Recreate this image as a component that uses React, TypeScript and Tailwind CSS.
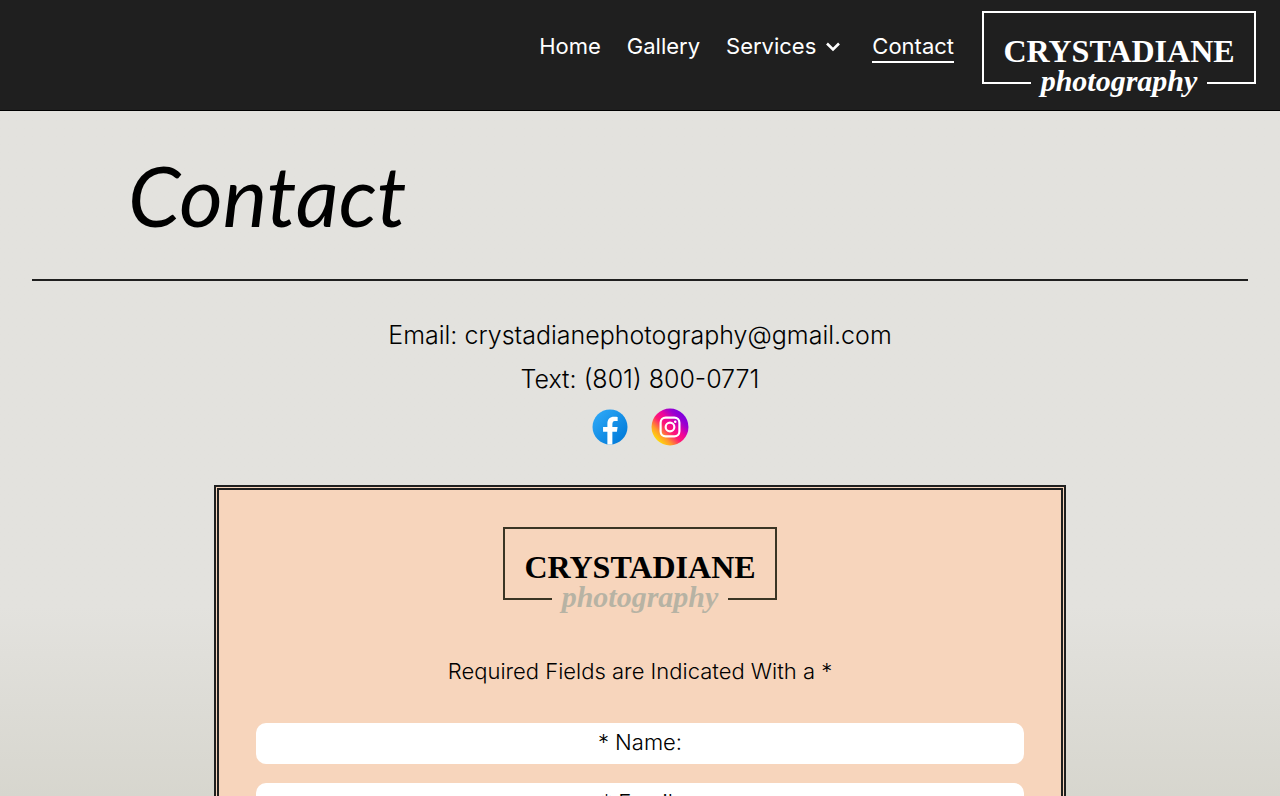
import { useState } from "react";

const Logo = ({ dark }: { dark?: boolean }) => {
  const line = dark ? "border-[#3a3524]" : "border-white";

  return (
    <div className="w-[274px]">
      <div
        className={`flex h-[72px] justify-center border-2 border-b-0 pt-[18px] ${line}`}
      >
        <span
          className={`font-['Liberation_Serif',serif] text-[32px] leading-10 font-bold ${
            dark ? "text-black" : "text-white"
          }`}
        >
          CRYSTADIANE
        </span>
      </div>
      <div className="-mt-4 flex h-8 items-center">
        <span className={`flex-1 border-t-2 ${line}`} />
        <span
          className={`px-[10px] pb-1 font-['Liberation_Serif',serif] text-[30px] leading-7 font-bold italic ${
            dark ? "text-[#b7b3a4]" : "text-white"
          }`}
        >
          photography
        </span>
        <span className={`flex-1 border-t-2 ${line}`} />
      </div>
    </div>
  );
};

const Header = () => {
  const [isOpen, setIsOpen] = useState(false);

  return (
    <header className="flex justify-end gap-7 border-b border-black bg-[#1f1f1f] pt-[11px] pr-6 pb-[11px] text-white">
      <nav className="flex items-start gap-[26px] pt-5 text-[22px] leading-[30px]">
        <a href="#home">Home</a>
        <a href="#gallery">Gallery</a>
        <div className="relative">
          <button
            type="button"
            aria-expanded={isOpen}
            onClick={() => setIsOpen(!isOpen)}
            className="flex cursor-pointer items-center gap-2 pr-1"
          >
            Services
            <svg viewBox="0 0 18 18" className="h-[18px] w-[18px]" fill="none">
              <path d="M3 6.500L9 12.500L15 6.500" stroke="currentColor" strokeWidth="2.6" />
            </svg>
          </button>
          {isOpen && (
            <div className="absolute top-10 left-0 bg-[#1f1f1f] px-4 py-2">
              <a href="#services">Services</a>
            </div>
          )}
        </div>
        <a href="#contact" className="border-b-2 border-white">
          Contact
        </a>
      </nav>
      <a href="#home">
        <Logo />
      </a>
    </header>
  );
};

const FacebookIcon = () => (
  <svg viewBox="0 0 48 48" className="h-[42px] w-[42px]">
    <defs>
      <linearGradient id="fb" x1="9.99" x2="40.15" y1="9.99" y2="40.15" gradientUnits="userSpaceOnUse">
        <stop offset="0" stopColor="#2aa4f4" />
        <stop offset="1" stopColor="#007ad9" />
      </linearGradient>
    </defs>
    <path fill="url(#fb)" d="M24,4C12.954,4,4,12.954,4,24s8.954,20,20,20s20-8.954,20-20S35.046,4,24,4z" />
    <path
      fill="#fff"
      d="M26.707,29.301h5.176l0.813-5.258h-5.989v-2.874c0-2.184,0.714-4.121,2.757-4.121h3.283V12.46c-0.577-0.078-1.797-0.248-4.102-0.248c-4.814,0-7.636,2.542-7.636,8.334v3.498H16.06v5.258h4.948v14.452C21.988,43.9,22.981,44,24,44c0.921,0,1.82-0.084,2.707-0.204V29.301z"
    />
  </svg>
);

const InstagramIcon = () => (
  <svg viewBox="-7 -7 116 116" className="h-[42px] w-[42px]">
    <defs>
      <linearGradient id="ig" x1="14" y1="88" x2="88" y2="14" gradientUnits="userSpaceOnUse">
        <stop offset="0" stopColor="#ffdd09" />
        <stop offset="0.2" stopColor="#ff9a2b" />
        <stop offset="0.42" stopColor="#ff1b70" />
        <stop offset="0.6" stopColor="#f0059a" />
        <stop offset="0.82" stopColor="#9b00d0" />
        <stop offset="1" stopColor="#7a00e0" />
      </linearGradient>
    </defs>
    <circle cx="51" cy="51" r="51" fill="url(#ig)" />
    <rect x="25" y="25" width="52" height="52" rx="14" fill="none" stroke="#fff" strokeWidth="6" />
    <circle cx="51" cy="51" r="12" fill="none" stroke="#fff" strokeWidth="6" />
    <circle cx="65.5" cy="36.5" r="3.5" fill="#fff" />
  </svg>
);

const Field = ({ name, type }: { name: string; type: string }) => (
  <input
    type={type}
    name={name}
    aria-label={name}
    placeholder={`* ${name}:`}
    required
    className="h-[41px] w-full rounded-[10px] bg-white pb-1 text-center text-[22px] font-light text-black placeholder-black outline-none"
  />
);

export default function App() {
  return (
    <div className="min-h-screen bg-linear-to-b from-[#e3e2de] from-67% to-[#d0cfc5] font-[Inter,sans-serif] text-black">
      <Header />
      <main className="pb-10">
        <h1 className="px-[10%] pt-9 font-[Lato,sans-serif] text-[84px] leading-[96px] italic">
          Contact
        </h1>
        <hr className="mx-8 mt-9 border-t-2 border-[#1f1f1f]" />
        <section className="flex flex-col items-center pt-8 text-[25px] leading-[44px] font-light">
          <p>
            Email: <a href="mailto:crystadianephotography@gmail.com">crystadianephotography@gmail.com</a>
          </p>
          <p>Text: (801) 800-0771</p>
          <div className="mt-[5px] flex items-center gap-[18px]">
            <a href="#facebook" aria-label="Facebook">
              <FacebookIcon />
            </a>
            <a href="#instagram" aria-label="Instagram">
              <InstagramIcon />
            </a>
          </div>
        </section>
        <form className="mx-auto mt-[37px] flex w-[66.5%] flex-col items-center border-[5px] border-double border-[#1f1f1f] bg-[#f7d5bc] p-[37px]">
          <Logo dark />
          <p className="mt-10 text-[22px] leading-8 font-light">
            Required Fields are Indicated With a *
          </p>
          <div className="mt-9 flex w-full flex-col gap-[19px]">
            <Field name="Name" type="text" />
            <Field name="Email" type="email" />
          </div>
        </form>
      </main>
    </div>
  );
}
